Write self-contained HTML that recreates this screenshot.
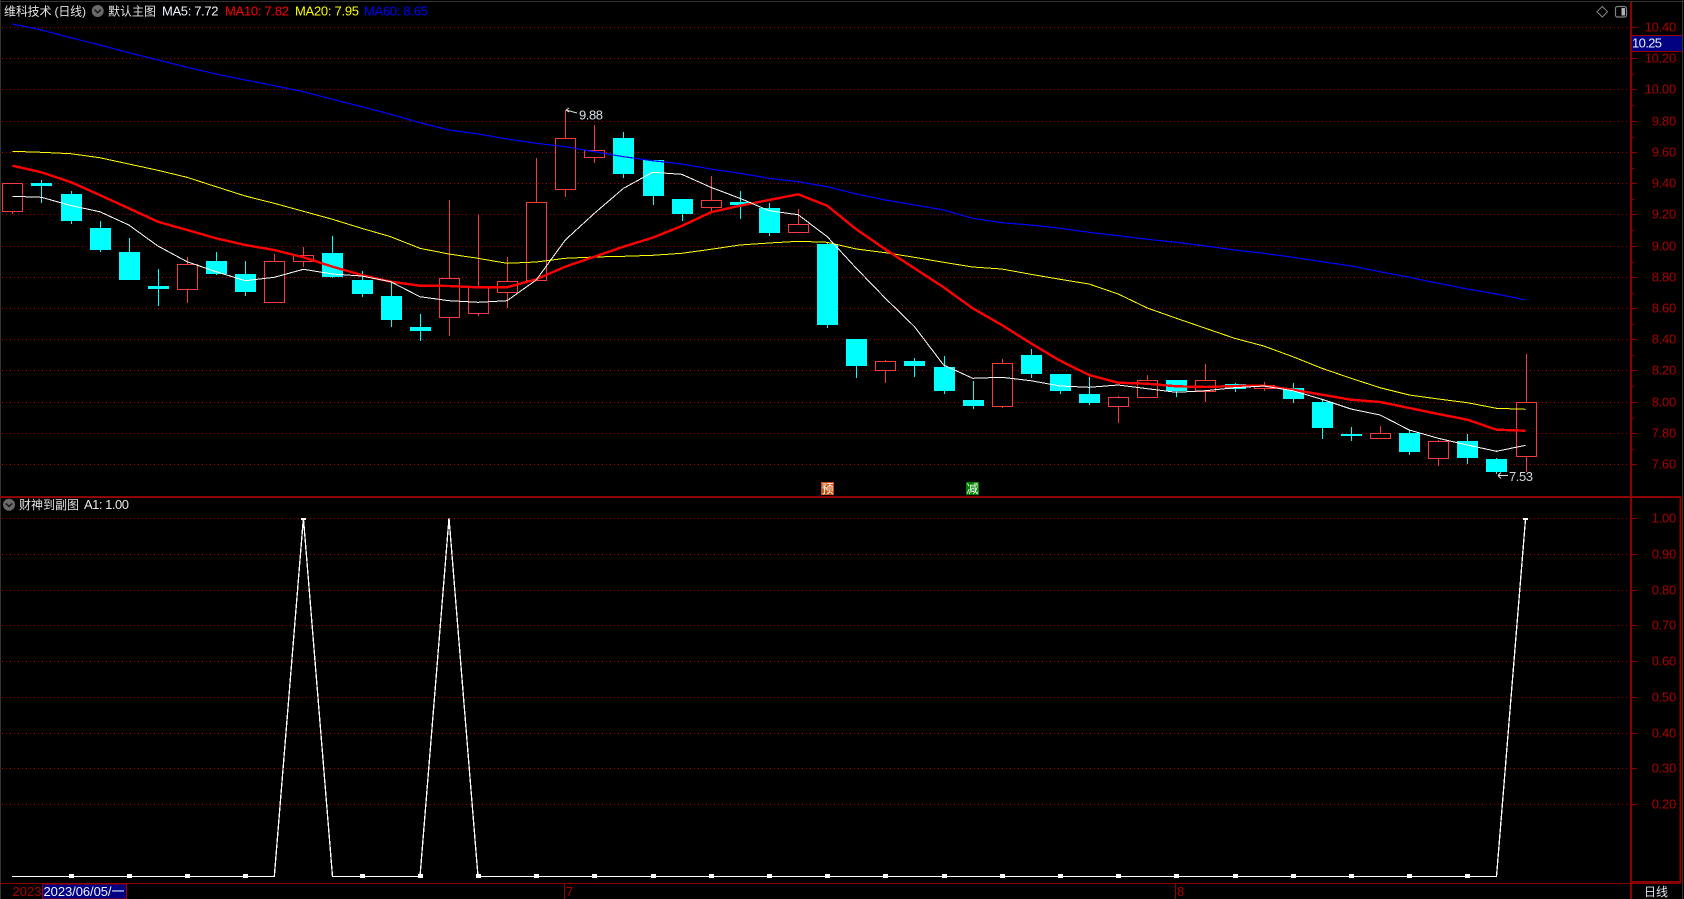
<!DOCTYPE html>
<html lang="zh-CN">
<head>
<meta charset="utf-8">
<title>维科技术 (日线)</title>
<style>
html,body{margin:0;padding:0;background:#000;width:1684px;height:899px;overflow:hidden}
svg{display:block;position:absolute;left:0;top:0}
text{font-family:"Liberation Sans","Noto Sans CJK SC",sans-serif;font-size:13px}
.ax{fill:#a80000;font-size:13px;text-anchor:end;letter-spacing:-.25px}
.cjk{font-size:12px}
.ln{fill:none;shape-rendering:crispEdges}
</style>
</head>
<body>
<svg width="1684" height="899" viewBox="0 0 1684 899" xmlns="http://www.w3.org/2000/svg">
<rect width="1684" height="899" fill="#000"/>
<!-- outer frame -->
<path d="M0 1.5H1684M.5 0V899M1682.5 0V899" stroke="#333" fill="none" shape-rendering="crispEdges"/>
<!-- dotted grid -->
<path d="M2 27.5H1628M2 58.5H1628M2 89.5H1628M2 121.5H1628M2 152.5H1628M2 183.5H1628M2 214.5H1628M2 246.5H1628M2 277.5H1628M2 308.5H1628M2 339.5H1628M2 370.5H1628M2 402.5H1628M2 433.5H1628M2 464.5H1628M2 518.5H1628M2 554.5H1628M2 590.5H1628M2 625.5H1628M2 661.5H1628M2 697.5H1628M2 733.5H1628M2 768.5H1628M2 804.5H1628" stroke="#b00000" stroke-dasharray="1 3" fill="none" shape-rendering="crispEdges"/>
<!-- cyan candles -->
<path d="M41.5 180V203M71.5 191V224M100.5 221V252M129.5 238V280M158.5 269V306M216.5 252V275M245.5 261V296M332.5 236V278M362.5 271V297M391.5 283V327M420.5 314V341M623.5 132V178M653.5 160V205M682.5 199V221M740.5 191V219M769.5 203V236M827.5 243V328M856.5 339V378M914.5 358V377M944.5 356V394M973.5 381V409M1031.5 349V378M1060.5 374V394M1089.5 377V405M1176.5 380V397M1235.5 383V392M1293.5 383V403M1322.5 399V439M1351.5 427V441M1409.5 430V455M1467.5 434V464M1496.5 458V474" stroke="#00ffff" fill="none" shape-rendering="crispEdges"/>
<g fill="#00ffff" shape-rendering="crispEdges">
<rect x="31" y="183" width="21" height="3"/><rect x="61" y="194" width="21" height="27"/><rect x="90" y="228" width="21" height="22"/><rect x="119" y="252" width="21" height="28"/><rect x="148" y="286" width="21" height="3"/><rect x="206" y="261" width="21" height="13"/><rect x="235" y="274" width="21" height="18"/><rect x="322" y="253" width="21" height="24"/><rect x="352" y="280" width="21" height="14"/><rect x="381" y="296" width="21" height="24"/><rect x="410" y="327" width="21" height="4"/><rect x="613" y="138" width="21" height="36"/><rect x="643" y="160" width="21" height="36"/><rect x="672" y="199" width="21" height="15"/><rect x="730" y="202" width="21" height="3"/><rect x="759" y="208" width="21" height="25"/><rect x="817" y="244" width="21" height="81"/><rect x="846" y="339" width="21" height="27"/><rect x="904" y="361" width="21" height="5"/><rect x="934" y="367" width="21" height="24"/><rect x="963" y="400" width="21" height="6"/><rect x="1021" y="355" width="21" height="19"/><rect x="1050" y="374" width="21" height="17"/><rect x="1079" y="394" width="21" height="9"/><rect x="1166" y="380" width="21" height="11"/><rect x="1225" y="384" width="21" height="5"/><rect x="1283" y="388" width="21" height="11"/><rect x="1312" y="402" width="21" height="26"/><rect x="1341" y="434" width="21" height="2"/><rect x="1399" y="433" width="21" height="19"/><rect x="1457" y="441" width="21" height="17"/><rect x="1486" y="459" width="21" height="13"/>
</g>
<!-- red candles -->
<path d="M12.5 212V214M187.5 257V264M187.5 290V303M274.5 254V261M303.5 247V255M303.5 262V267M449.5 200V278M449.5 318V336M478.5 215V286M478.5 314V316M507.5 257V281M507.5 293V308M536.5 158V202M565.5 110V138M565.5 190V197M594.5 125V150M594.5 158V163M711.5 176V200M711.5 208V212M798.5 209V224M885.5 360V361M885.5 371V383M1002.5 359V363M1002.5 407V408M1118.5 396V397M1118.5 407V423M1147.5 375V380M1205.5 364V380M1205.5 392V402M1264.5 382V385M1264.5 389V391M1380.5 426V433M1438.5 440V441M1438.5 459V466M1526.5 354V402M1526.5 457V472" stroke="#f43c3c" fill="none" shape-rendering="crispEdges"/>
<g fill="#000" stroke="#f43c3c" shape-rendering="crispEdges">
<rect x="2.5" y="183.5" width="20" height="28"/><rect x="177.5" y="264.5" width="20" height="25"/><rect x="264.5" y="261.5" width="20" height="41"/><rect x="293.5" y="255.5" width="20" height="6"/><rect x="439.5" y="278.5" width="20" height="39"/><rect x="468.5" y="286.5" width="20" height="27"/><rect x="497.5" y="281.5" width="20" height="11"/><rect x="526.5" y="202.5" width="20" height="78"/><rect x="555.5" y="138.5" width="20" height="51"/><rect x="584.5" y="150.5" width="20" height="7"/><rect x="701.5" y="200.5" width="20" height="7"/><rect x="788.5" y="224.5" width="20" height="8"/><rect x="875.5" y="361.5" width="20" height="9"/><rect x="992.5" y="363.5" width="20" height="43"/><rect x="1108.5" y="397.5" width="20" height="9"/><rect x="1137.5" y="380.5" width="20" height="17"/><rect x="1195.5" y="380.5" width="20" height="11"/><rect x="1254.5" y="385.5" width="20" height="3"/><rect x="1370.5" y="433.5" width="20" height="5"/><rect x="1428.5" y="441.5" width="20" height="17"/><rect x="1516.5" y="402.5" width="20" height="54"/>
</g>
<!-- MA60 -->
<polyline class="ln" stroke="#0000ff" stroke-width="1.2" points="12.4,24 41.5,30 70.6,37.7 99.7,45 128.8,52.7 157.9,60 187,67.3 216.1,74 245.2,80 274.3,85.7 303.4,91.7 332.5,99.3 361.6,106.7 390.7,114.3 419.8,122.7 448.9,130 478,134 507.1,139 536.2,143.3 565.3,146.7 594.4,151.7 623.5,156.7 652.6,160.7 681.7,164 710.8,169 739.9,173.3 769,178.3 798.1,181.7 827.2,186.7 856.3,194 885.4,200 914.5,205 943.6,210 972.7,218.3 1001.8,222.7 1030.9,225 1060,228.3 1089.1,232.3 1118.2,235.7 1147.3,239.3 1176.4,242.3 1205.5,246 1234.6,250 1263.7,253.3 1292.8,257.3 1321.9,261.7 1351,266 1380.1,271.7 1409.2,277.3 1438.3,283.3 1467.4,289 1496.5,294 1525.6,300"/>
<!-- MA20 -->
<polyline class="ln" stroke="#ffff00" stroke-width="1" points="12.4,151.3 41.5,152.3 70.6,153.7 99.7,157.7 128.8,164 157.9,170.3 187,177.3 216.1,186.7 245.2,196 274.3,203.3 303.4,211.3 332.5,219.3 361.6,228.3 390.7,236.7 419.8,248.3 448.9,254 478,258.3 507.1,263.3 536.2,262 565.3,258.3 594.4,257 623.5,256.3 652.6,255.3 681.7,253.3 710.8,249.3 739.9,245 769,243 798.1,241.3 827.2,242.3 856.3,249 885.4,252.7 914.5,257.3 943.6,262.3 972.7,267 1001.8,269 1030.9,274.3 1060,279.3 1089.1,284 1118.2,294 1147.3,308 1176.4,318.3 1205.5,328.3 1234.6,338.3 1263.7,346 1292.8,356.7 1321.9,368.3 1351,378.3 1380.1,387.7 1409.2,395 1438.3,399 1467.4,402.7 1496.5,408.3 1525.6,409.3"/>
<!-- MA10 -->
<polyline class="ln" stroke="#ff0000" stroke-width="2.4" points="12.4,165.7 41.5,172.3 70.6,182 99.7,195 128.8,208.3 157.9,221.7 187,230 216.1,238.3 245.2,245 274.3,250 303.4,257.3 332.5,266.7 361.6,275 390.7,281.7 419.8,285.7 448.9,286 478,287.3 507.1,287.3 536.2,279.3 565.3,266.7 594.4,256.7 623.5,246.7 652.6,237.7 681.7,226 710.8,212.3 739.9,205.7 769,200 798.1,194.3 827.2,205.7 856.3,229.3 885.4,249.3 914.5,268.3 943.6,287.3 972.7,308.3 1001.8,325 1030.9,343.3 1060,360.7 1089.1,375 1118.2,382.7 1147.3,383.7 1176.4,386.3 1205.5,387 1234.6,386 1263.7,385.7 1292.8,389.7 1321.9,394.7 1351,399.7 1380.1,402 1409.2,408 1438.3,414 1467.4,419.7 1496.5,429.7 1525.6,430.7"/>
<!-- MA5 -->
<polyline class="ln" stroke="#ffffff" stroke-width="1" points="12.4,196.3 41.5,197.3 70.6,205.5 99.7,211.7 128.8,225 157.9,246 187,261.7 216.1,271.7 245.2,280.7 274.3,277.3 303.4,269.3 332.5,274 361.6,276 390.7,281.7 419.8,296.7 448.9,300.7 478,302.3 507.1,300.7 536.2,280 565.3,240 594.4,213.3 623.5,188.3 652.6,172.3 681.7,174.3 710.8,187.3 739.9,198.3 769,210.7 798.1,214.7 827.2,236.7 856.3,268.3 885.4,298.3 914.5,326.7 943.6,365 972.7,378.3 1001.8,377.3 1030.9,380.7 1060,386 1089.1,387.3 1118.2,385 1147.3,388.7 1176.4,392.3 1205.5,390.7 1234.6,387.7 1263.7,386 1292.8,390.7 1321.9,399.3 1351,409 1380.1,415 1409.2,430 1438.3,438.3 1467.4,445 1496.5,451.3 1525.6,445.3"/>
<!-- markers -->
<rect x="821" y="482" width="13" height="13" fill="#c2500f"/>
<text x="827.5" y="493" fill="#fff" text-anchor="middle" class="cjk">预</text>
<rect x="966" y="482" width="13" height="13" fill="#008000"/>
<text x="972.5" y="493" fill="#fff" text-anchor="middle" class="cjk">减</text>
<!-- high/low annotations -->
<path d="M566 110L577 113M566 110l3-2M566 110l3 2M1498 475.5H1508M1498 475.5l3-3M1498 475.5l3 3" stroke="#ddd" fill="none"/>
<text x="579" y="119.5" fill="#d8e0e8" textLength="24" lengthAdjust="spacing">9.88</text>
<text x="1509" y="481" fill="#d0d8e0" textLength="24" lengthAdjust="spacing">7.53</text>
<!-- panel lines -->
<path d="M0 497H1681" stroke="#8c0000" stroke-width="2" fill="none" shape-rendering="crispEdges"/>
<path d="M0 883.5H1681" stroke="#8c0000" fill="none" shape-rendering="crispEdges"/>
<path d="M1631 2V899" stroke="#8c0000" stroke-width="2" fill="none" shape-rendering="crispEdges"/>
<path d="M1680.5 497V883M1631 882H1681" stroke="#8c0000" stroke-width="2" fill="none" shape-rendering="crispEdges"/>
<!-- axis ticks -->
<path d="M1632 27.5H1637M1632 58.5H1637M1632 89.5H1637M1632 121.5H1637M1632 152.5H1637M1632 183.5H1637M1632 214.5H1637M1632 246.5H1637M1632 277.5H1637M1632 308.5H1637M1632 339.5H1637M1632 370.5H1637M1632 402.5H1637M1632 433.5H1637M1632 464.5H1637M1632 74.5H1634M1632 105.5H1634M1632 137.5H1634M1632 168.5H1634M1632 199.5H1634M1632 230.5H1634M1632 262.5H1634M1632 293.5H1634M1632 324.5H1634M1632 355.5H1634M1632 386.5H1634M1632 418.5H1634M1632 449.5H1634M1632 518.5H1637M1632 554.5H1637M1632 590.5H1637M1632 625.5H1637M1632 661.5H1637M1632 697.5H1637M1632 733.5H1637M1632 768.5H1637M1632 804.5H1637" stroke="#8c0000" fill="none" shape-rendering="crispEdges"/>
<!-- axis labels -->
<g>
<text class="ax" x="1676" y="31.5">10.40</text>
<text class="ax" x="1676" y="62.5">10.20</text>
<text class="ax" x="1676" y="93.5">10.00</text>
<text class="ax" x="1676" y="125.5">9.80</text>
<text class="ax" x="1676" y="156.5">9.60</text>
<text class="ax" x="1676" y="187.5">9.40</text>
<text class="ax" x="1676" y="218.5">9.20</text>
<text class="ax" x="1676" y="250.5">9.00</text>
<text class="ax" x="1676" y="281.5">8.80</text>
<text class="ax" x="1676" y="312.5">8.60</text>
<text class="ax" x="1676" y="343.5">8.40</text>
<text class="ax" x="1676" y="374.5">8.20</text>
<text class="ax" x="1676" y="406.5">8.00</text>
<text class="ax" x="1676" y="437.5">7.80</text>
<text class="ax" x="1676" y="468.5">7.60</text>
<text class="ax" x="1676" y="522.5">1.00</text>
<text class="ax" x="1676" y="558.5">0.90</text>
<text class="ax" x="1676" y="594.5">0.80</text>
<text class="ax" x="1676" y="629.5">0.70</text>
<text class="ax" x="1676" y="665.5">0.60</text>
<text class="ax" x="1676" y="701.5">0.50</text>
<text class="ax" x="1676" y="737.5">0.40</text>
<text class="ax" x="1676" y="772.5">0.30</text>
<text class="ax" x="1676" y="808.5">0.20</text>
</g>
<!-- price box -->
<rect x="1632" y="35" width="50" height="16.5" fill="#000080" shape-rendering="crispEdges"/>
<path d="M1632 35.5H1682M1632 51.5H1682" stroke="#a00000" fill="none" shape-rendering="crispEdges"/>
<text x="1632" y="47.5" fill="#e8f0ff" textLength="30" lengthAdjust="spacing">10.25</text>
<!-- top right icons -->
<path d="M1602.3 6.5L1607.5 11.7L1602.3 17L1597 11.7Z" fill="none" stroke="#888"/>
<rect x="1615.5" y="6.5" width="11" height="10.5" rx="2" fill="none" stroke="#808080" stroke-width="1.2"/>
<rect x="1621.5" y="8" width="3.5" height="7.5" fill="#b0b0b0"/>
<!-- header -->
<text x="4" y="15.5" fill="#e4e4e4" class="cjk" textLength="82" lengthAdjust="spacing">维科技术 (日线)</text>
<circle cx="97.7" cy="11" r="6" fill="#6a6a6a"/>
<path d="M94.5 9.7L97.7 12.7L100.9 9.7" fill="none" stroke="#1a1a1a" stroke-width="1.6"/>
<text x="108" y="15.5" fill="#e4e4e4" class="cjk" textLength="48" lengthAdjust="spacing">默认主图</text>
<text x="162" y="15.5" fill="#f0f4ff" textLength="56.5" lengthAdjust="spacing">MA5: 7.72</text>
<text x="225" y="15.5" fill="#ff0000" textLength="64" lengthAdjust="spacing">MA10: 7.82</text>
<text x="295" y="15.5" fill="#ffff00" textLength="64" lengthAdjust="spacing">MA20: 7.95</text>
<text x="364" y="15.5" fill="#0000ff" textLength="64" lengthAdjust="spacing">MA60: 8.65</text>
<!-- sub panel header -->
<circle cx="9" cy="504.7" r="6" fill="#6a6a6a"/>
<path d="M5.8 503.4L9 506.4L12.2 503.4" fill="none" stroke="#1a1a1a" stroke-width="1.6"/>
<text x="19" y="509" fill="#e4e4e4" class="cjk" textLength="60" lengthAdjust="spacing">财神到副图</text>
<text x="84" y="509" fill="#e8e8e8" textLength="45" lengthAdjust="spacing">A1: 1.00</text>
<!-- sub chart -->
<polyline class="ln" stroke="#fff" stroke-width="1.3" points="12,876.5 274.3,876.5 303.4,518 332.5,876.5 420,876.5 449,518 478,876.5 1496.5,876.5 1525.6,518"/>
<g fill="#fff" shape-rendering="crispEdges">
<rect x="69" y="874" width="5" height="4"/><rect x="127" y="874" width="5" height="4"/><rect x="185" y="874" width="5" height="4"/><rect x="243" y="874" width="5" height="4"/><rect x="360" y="874" width="5" height="4"/><rect x="418" y="874" width="5" height="4"/><rect x="476" y="874" width="5" height="4"/><rect x="534" y="874" width="5" height="4"/><rect x="592" y="874" width="5" height="4"/><rect x="651" y="874" width="5" height="4"/><rect x="709" y="874" width="5" height="4"/><rect x="767" y="874" width="5" height="4"/><rect x="825" y="874" width="5" height="4"/><rect x="883" y="874" width="5" height="4"/><rect x="942" y="874" width="5" height="4"/><rect x="1000" y="874" width="5" height="4"/><rect x="1058" y="874" width="5" height="4"/><rect x="1116" y="874" width="5" height="4"/><rect x="1174" y="874" width="5" height="4"/><rect x="1233" y="874" width="5" height="4"/><rect x="1291" y="874" width="5" height="4"/><rect x="1349" y="874" width="5" height="4"/><rect x="1407" y="874" width="5" height="4"/><rect x="1465" y="874" width="5" height="4"/><rect x="301" y="518" width="5" height="2"/><rect x="1523" y="518" width="5" height="2"/>
</g>
<!-- time axis -->
<text x="12.5" y="896" fill="#a80000">2023</text>
<rect x="42.5" y="884" width="84" height="15" fill="#000080" stroke="#a00000" shape-rendering="crispEdges"/>
<text x="43.5" y="896" fill="#f0f4ff" textLength="81" lengthAdjust="spacing">2023/06/05/一</text>
<path d="M564.5 884V899M1175.5 884V899" stroke="#8c0000" fill="none" shape-rendering="crispEdges"/>
<text x="566" y="896" fill="#a80000">7</text>
<text x="1177" y="896" fill="#a80000">8</text>
<text x="1644" y="896" fill="#dde4ee" class="cjk" textLength="24" lengthAdjust="spacing">日线</text>
</svg>
</body>
</html>
